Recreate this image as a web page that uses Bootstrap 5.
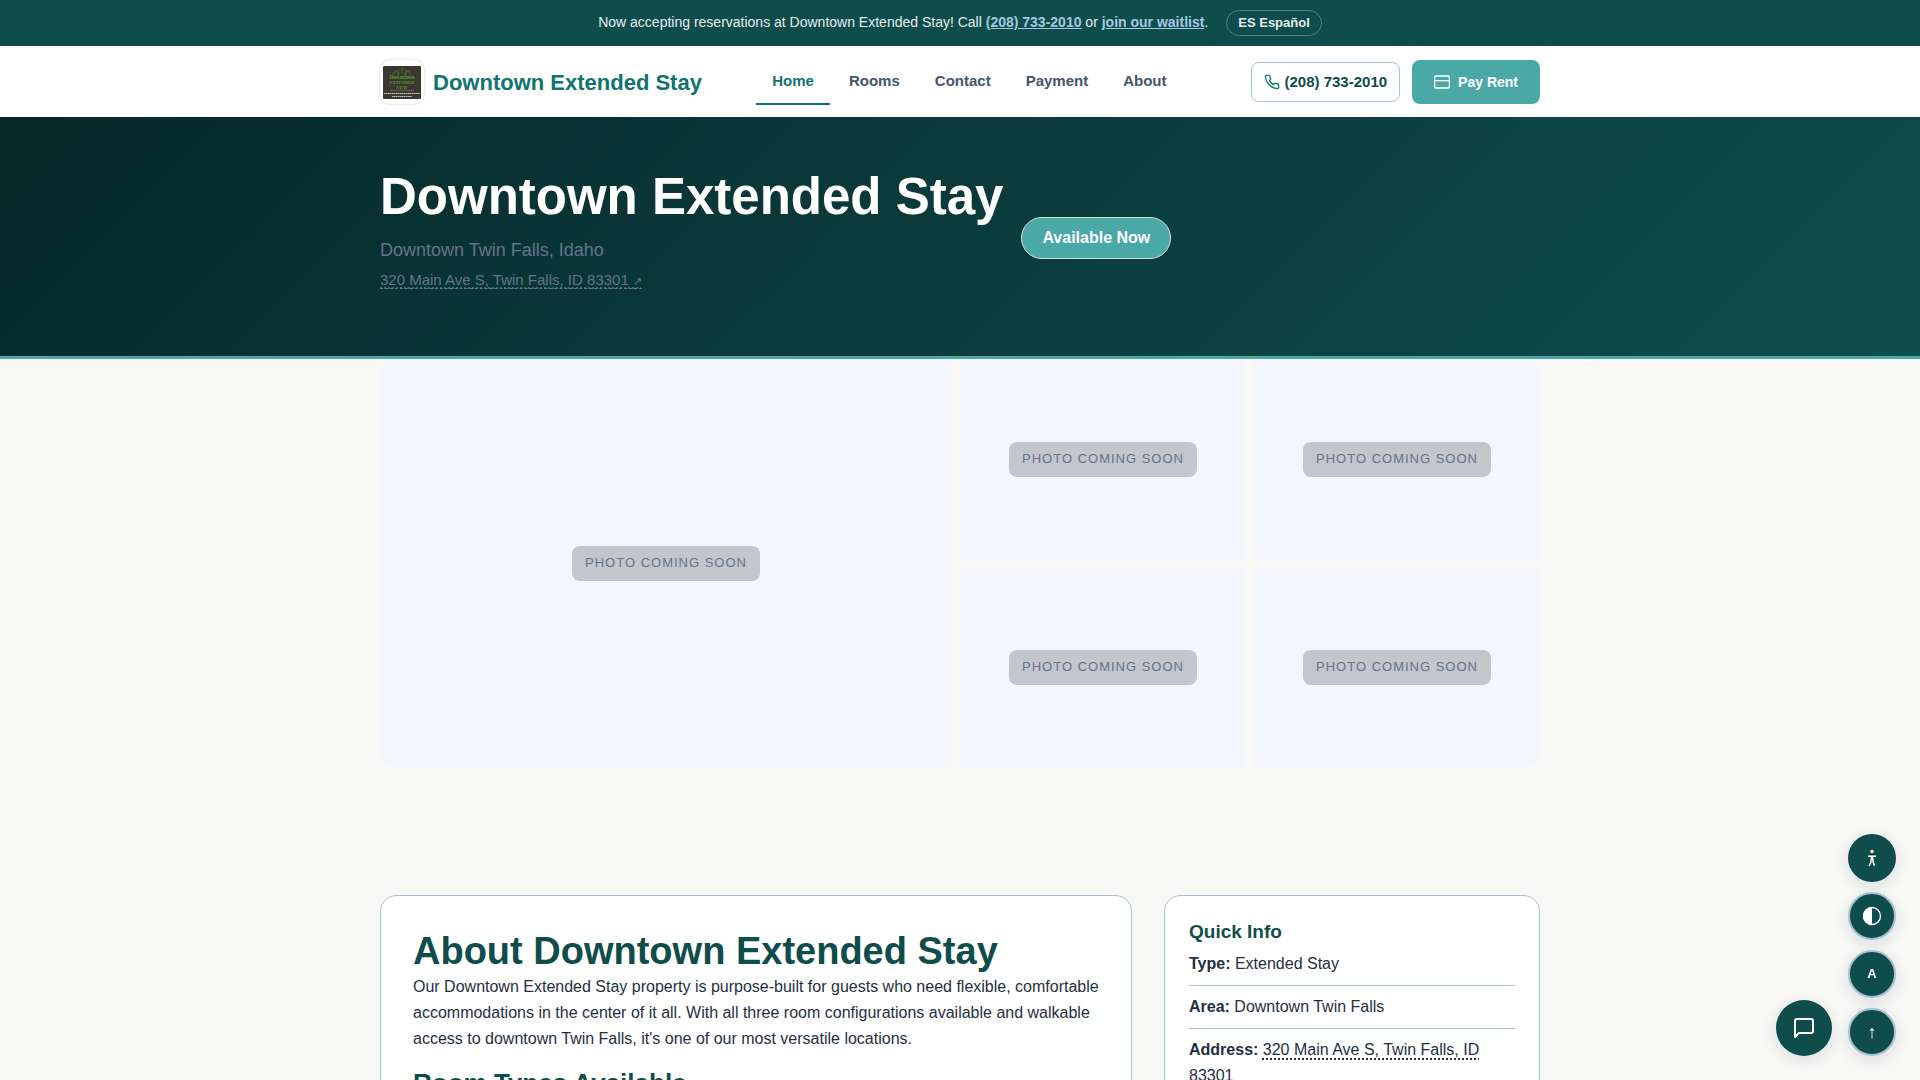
<!DOCTYPE html>
<html lang="en">
<head>
<meta charset="utf-8">
<meta name="viewport" content="width=device-width, initial-scale=1">
<title>Downtown Extended Stay</title>
<link href="https://cdn.jsdelivr.net/npm/bootstrap@5.3.0/dist/css/bootstrap.min.css" rel="stylesheet">
<style>
:root{--deep:#0f4c4c;--teal:#4aa8a6;--line:#a8c0d4;--ink:#1f2f43;--brand:#0f7470}
body{font-family:"Liberation Sans",Arial,sans-serif;font-size:16px;line-height:26px;color:var(--ink);background:#f8f8f6}
.wrap{max-width:1200px;padding:0 20px;margin:0 auto}
.notice{background:var(--deep);color:#e5eded;font-size:14px;line-height:22px;padding:10px 20px;gap:18px}
.notice p{margin:0 0 2px}
.notice a{color:#a3c8e0;font-weight:700}
.lang{font-size:13px;font-weight:700;line-height:20px;color:#e5eded;background:none;border:1px solid #54807f;border-radius:14px;padding:2px 11px}
.site-head{background:#fff}
.site-head .wrap{min-height:71px}
.brand{gap:9px}
.logo{width:44px;height:44px;border-radius:10px;box-shadow:0 0 0 1px #e9ebec;background:#fff}
.brand-name{font-size:22px;font-weight:700;line-height:30px;padding-top:2px;color:var(--brand)}
.main-nav{gap:3px}
.main-nav .nav-link{font-size:15px;line-height:24px;font-weight:700;color:#43566b;padding:10px 16px;border-bottom:2px solid transparent}
.main-nav .nav-link.active{color:var(--brand);border-color:var(--brand)}
.actions{margin-left:68px}
.btn-call,.btn-pay{font-weight:700;border-radius:8px}
.btn-call{font-size:15px;line-height:24px;color:var(--deep);border:1px solid var(--line);padding:7px 12px;gap:5px}
.btn-pay,.btn-pay:hover{font-size:14px;line-height:24px;color:#fff;background:var(--teal);border:0;padding:10px 22px}
.hero{background:linear-gradient(135deg,#062829 0%,#0f4e4e 100%);border-bottom:3px solid var(--teal);padding:49px 0 47px}
.hero-row{gap:18px}
.hero h1{font-size:51px;line-height:61px;font-weight:700;color:#fff;margin-bottom:9px}
.hero-sub{font-size:18px;line-height:28px;color:#64748b;margin-bottom:4px}
.hero-addr{font-size:15px;line-height:24px;margin-bottom:17px}
.hero-addr a{color:#64748b;border-bottom:1px dashed #64748b}
.hero-addr small{font-size:11px;line-height:10px}
.dotted{text-decoration:underline dotted;text-underline-offset:3px;color:inherit}
.facts .dotted{text-decoration-thickness:2px}
.avail{font-weight:700;line-height:26px;color:#fff;background:var(--teal);border:1px solid #cfe8c4;border-radius:21px;padding:7px 20px}
.gallery{display:grid;grid-template-columns:2fr 1fr 1fr;grid-auto-rows:200px;gap:8px;border-radius:16px;overflow:hidden;background:#f9f8f5}
.shot{background:#f3f6fb;min-width:0}
.shot-main{grid-row:span 2}
.soon{font-size:13px;line-height:21px;letter-spacing:1px;text-transform:uppercase;color:#64748b;background:#c3c6cb;border-radius:8px;padding:6px 13px 8px}
.details{display:grid;grid-template-columns:2fr 1fr;gap:32px;margin-top:128px;margin-bottom:48px}
.panel{background:#fff;border:1px solid var(--line);border-radius:16px}
.panel-main{padding:32px}
.panel-side{padding:24px}
.panel h2,.panel h3{font-weight:700;color:var(--deep);margin:0}
.panel h2{font-size:38px;line-height:46px}
.panel-main h3{font-size:26px;line-height:31px}
.panel-side h3{font-size:19px;line-height:23px}
.facts li{padding:8px 0;border-bottom:1px solid var(--line)}
.facts li:last-child{border:0}
.floaters{right:24px;bottom:24px;gap:16px;z-index:20}
.tools{gap:10px}
.fab{width:48px;height:48px;padding:0;border-radius:50%;border:0;color:#fff;background:var(--deep);box-shadow:0 4px 16px rgba(15,40,60,.13);font-size:13px;font-weight:700}
.fab-ring{border:2px solid var(--line)}
.fab-up{font-size:18px;font-weight:400}
.fab-chat{width:56px;height:56px}
@media (max-width:991px){.details,.gallery{grid-template-columns:1fr}.shot-main{grid-row:auto}.site-head .wrap{flex-wrap:wrap}.actions{margin-left:0}}
</style>
</head>
<body>
<div class="notice d-flex flex-wrap justify-content-center align-items-center">
  <p>Now accepting reservations at Downtown Extended Stay! Call <a href="tel:2087332010">(208) 733-2010</a> or <a href="#waitlist">join our waitlist</a>.</p>
  <button class="lang" type="button">ES Español</button>
</div>
<header class="site-head">
  <div class="wrap d-flex align-items-center">
    <a class="brand d-flex align-items-center text-decoration-none" href="#home">
      <svg class="logo" viewBox="0 0 44 44" aria-hidden="true">
        <rect x="3" y="6" width="38" height="33" rx="1" fill="#3d3731"/>
        <g fill="none" stroke="#3f7430" stroke-width=".7"><path d="M14 13l8-5 8 5M22 8v6M18 11v4M26 11v4"/><circle cx="16" cy="14" r="3"/><circle cx="28" cy="14" r="3"/></g>
        <g fill="#4f9a2f" font-family="Liberation Serif,serif" font-weight="700" text-anchor="middle"><text x="22" y="19" font-size="5.500">Downtown</text><text x="22" y="24" font-size="4.500">EXTENDED</text><text x="22" y="28.500" font-size="4.500">STAY</text></g>
        <path d="M10 30.500h24" stroke="#777068" stroke-width=".6"/>
        <path d="M4 33.500h36M12 36.500h20" stroke="#d6d2cd" stroke-width=".9" stroke-dasharray="1.600 .4"/>
      </svg>
      <span class="brand-name">Downtown Extended Stay</span>
    </a>
    <nav class="nav main-nav ms-auto" aria-label="Main">
      <a class="nav-link active" aria-current="page" href="#home">Home</a>
      <a class="nav-link" href="#rooms">Rooms</a>
      <a class="nav-link" href="#contact">Contact</a>
      <a class="nav-link" href="#payment">Payment</a>
      <a class="nav-link" href="#about">About</a>
    </nav>
    <div class="actions d-flex align-items-center">
      <a class="btn btn-call d-flex align-items-center me-2" href="tel:2087332010">
        <svg width="16" height="16" viewBox="0 0 24 24" fill="none" stroke="#0f7470" stroke-width="2" stroke-linecap="round" stroke-linejoin="round" aria-hidden="true"><path d="M22 16.920v3a2 2 0 0 1-2.180 2 19.790 19.790 0 0 1-8.630-3.070 19.500 19.500 0 0 1-6-6 19.790 19.790 0 0 1-3.070-8.670A2 2 0 0 1 4.110 2h3a2 2 0 0 1 2 1.720c.127.960.361 1.903.7 2.810a2 2 0 0 1-.45 2.110L8.090 9.910a16 16 0 0 0 6 6l1.270-1.270a2 2 0 0 1 2.110-.45c.907.339 1.850.573 2.810.7A2 2 0 0 1 22 16.920z"/></svg>
        (208) 733-2010</a>
      <a class="btn btn-pay d-flex align-items-center gap-2 ms-1" href="#payment">
        <svg width="16" height="16" viewBox="0 0 24 24" fill="none" stroke="currentColor" stroke-width="2" aria-hidden="true"><rect x="1" y="3" width="22" height="18" rx="2"/><path d="M1 10h22"/></svg>
        Pay Rent</a>
    </div>
  </div>
</header>
<section class="hero">
  <div class="wrap hero-row d-flex flex-wrap align-items-center">
    <div>
      <h1>Downtown Extended Stay</h1>
      <p class="hero-sub">Downtown Twin Falls, Idaho</p>
      <p class="hero-addr"><a class="dotted" href="#map">320 Main Ave S, Twin Falls, ID 83301 <small>↗</small></a></p>
    </div>
    <span class="avail">Available Now</span>
  </div>
</section>
<main class="wrap">
  <section class="gallery" aria-label="Photos">
    <div class="shot shot-main d-flex align-items-center justify-content-center"><span class="soon">Photo coming soon</span></div>
    <div class="shot d-flex align-items-center justify-content-center"><span class="soon">Photo coming soon</span></div>
    <div class="shot d-flex align-items-center justify-content-center"><span class="soon">Photo coming soon</span></div>
    <div class="shot d-flex align-items-center justify-content-center"><span class="soon">Photo coming soon</span></div>
    <div class="shot d-flex align-items-center justify-content-center"><span class="soon">Photo coming soon</span></div>
  </section>
  <div class="details">
    <article class="panel panel-main">
      <h2>About Downtown Extended Stay</h2>
      <p>Our Downtown Extended Stay property is purpose-built for guests who need flexible, comfortable accommodations in the center of it all. With all three room configurations available and walkable access to downtown Twin Falls, it's one of our most versatile locations.</p>
      <h3>Room Types Available</h3>
    </article>
    <aside class="panel panel-side">
      <h3>Quick Info</h3>
      <ul class="facts list-unstyled mb-0">
        <li><strong>Type:</strong> Extended Stay</li>
        <li><strong>Area:</strong> Downtown Twin Falls</li>
        <li><strong>Address:</strong> <a class="dotted" href="#map">320 Main Ave S, Twin Falls, ID 83301</a></li>
      </ul>
    </aside>
  </div>
</main>
<div class="floaters position-fixed d-flex align-items-end">
  <button class="fab fab-chat d-flex align-items-center justify-content-center" type="button" aria-label="Chat"><svg width="24" height="24" viewBox="0 0 24 24" fill="none" stroke="currentColor" stroke-width="2" stroke-linejoin="round" aria-hidden="true"><path d="M21 15a2 2 0 0 1-2 2H7l-4 4V5a2 2 0 0 1 2-2h14a2 2 0 0 1 2 2z"/></svg></button>
  <div class="tools d-flex flex-column">
    <button class="fab d-flex align-items-center justify-content-center" type="button" aria-label="Accessibility"><svg width="20" height="20" viewBox="0 0 20 20" fill="none" stroke="currentColor" stroke-width="1.500" aria-hidden="true"><circle cx="10" cy="3.500" r="1.800" fill="currentColor" stroke="none"/><path d="M6 8.200h8"/><path d="M8.700 8h2.600v4H8.700z" fill="currentColor" stroke="none"/><path d="M9.300 11l-.5 3.500L7 17.800M10.700 11l.6 3.500 1.200 3.300"/></svg></button>
    <button class="fab fab-ring d-flex align-items-center justify-content-center" type="button" aria-label="Contrast"><svg width="20" height="20" viewBox="0 0 20 20" aria-hidden="true"><circle cx="10" cy="10" r="8.500" fill="none" stroke="currentColor" stroke-width="1.300"/><path d="M10 1a9 9 0 0 0 0 18z" fill="currentColor"/></svg></button>
    <button class="fab fab-ring" type="button" aria-label="Text size">A</button>
    <button class="fab fab-ring fab-up" type="button" aria-label="Back to top">↑</button>
  </div>
</div>
<script src="https://cdn.jsdelivr.net/npm/bootstrap@5.3.0/dist/js/bootstrap.bundle.min.js"></script>
</body>
</html>
